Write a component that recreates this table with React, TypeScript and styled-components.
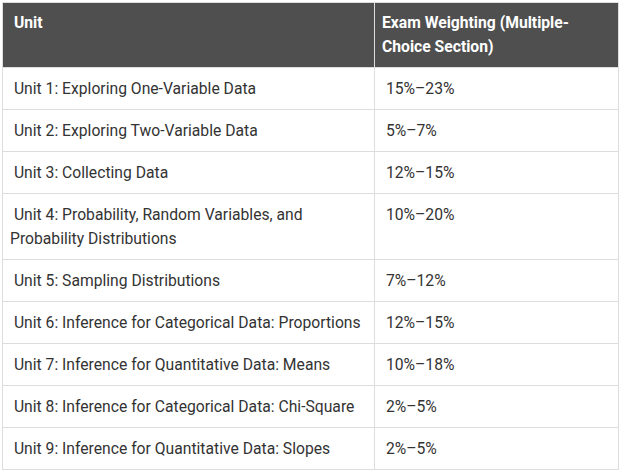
import React from "react";
import styled, { createGlobalStyle } from "styled-components";

const Global = createGlobalStyle`
  html, body { margin: 0; padding: 0; background: #ffffff; }
  body { font-family: Roboto, "Noto Sans", Arial, sans-serif; }
`;

const Wrap = styled.div`
  padding: 2px 3px 0 2px;
`;

const Table = styled.table`
  width: 616px;
  table-layout: fixed;
  border-collapse: collapse;
  font-size: 15.7px;
  line-height: 24px;
  color: #333333;
`;

const Col = styled.col<{ $w: number }>`
  width: ${(p) => p.$w}px;
`;

const HeadCell = styled.th`
  background: #4f4f4f;
  color: #ffffff;
  font-weight: 700;
  text-align: left;
  vertical-align: top;
  padding: 8px 5px 8px 7px;
  border: 1px solid #dddddd;
`;

const Cell = styled.td`
  text-align: left;
  vertical-align: top;
  padding: 9px 3px 8px 7px;
  border: 1px solid #dddddd;
`;

const rows: [string, string][] = [
  ["Unit 1: Exploring One-Variable Data", "15%–23%"],
  ["Unit 2: Exploring Two-Variable Data", "5%–7%"],
  ["Unit 3: Collecting Data", "12%–15%"],
  ["Unit 4: Probability, Random Variables, and Probability Distributions", "10%–20%"],
  ["Unit 5: Sampling Distributions", "7%–12%"],
  ["Unit 6: Inference for Categorical Data: Proportions", "12%–15%"],
  ["Unit 7: Inference for Quantitative Data: Means", "10%–18%"],
  ["Unit 8: Inference for Categorical Data: Chi-Square", "2%–5%"],
  ["Unit 9: Inference for Quantitative Data: Slopes", "2%–5%"],
];

export default function App() {
  return (
    <>
      <Global />
      <Wrap>
        <Table>
          <colgroup>
            <Col $w={372} />
            <Col $w={244} />
          </colgroup>
          <thead>
            <tr>
              <HeadCell>{"\u00a0Unit"}</HeadCell>
              <HeadCell>Exam Weighting (Multiple-Choice Section)</HeadCell>
            </tr>
          </thead>
          <tbody>
            {rows.map(([u, w]) => (
              <tr key={u}>
                <Cell>{"\u00a0" + u}</Cell>
                <Cell>{"\u00a0" + w}</Cell>
              </tr>
            ))}
          </tbody>
        </Table>
      </Wrap>
    </>
  );
}
